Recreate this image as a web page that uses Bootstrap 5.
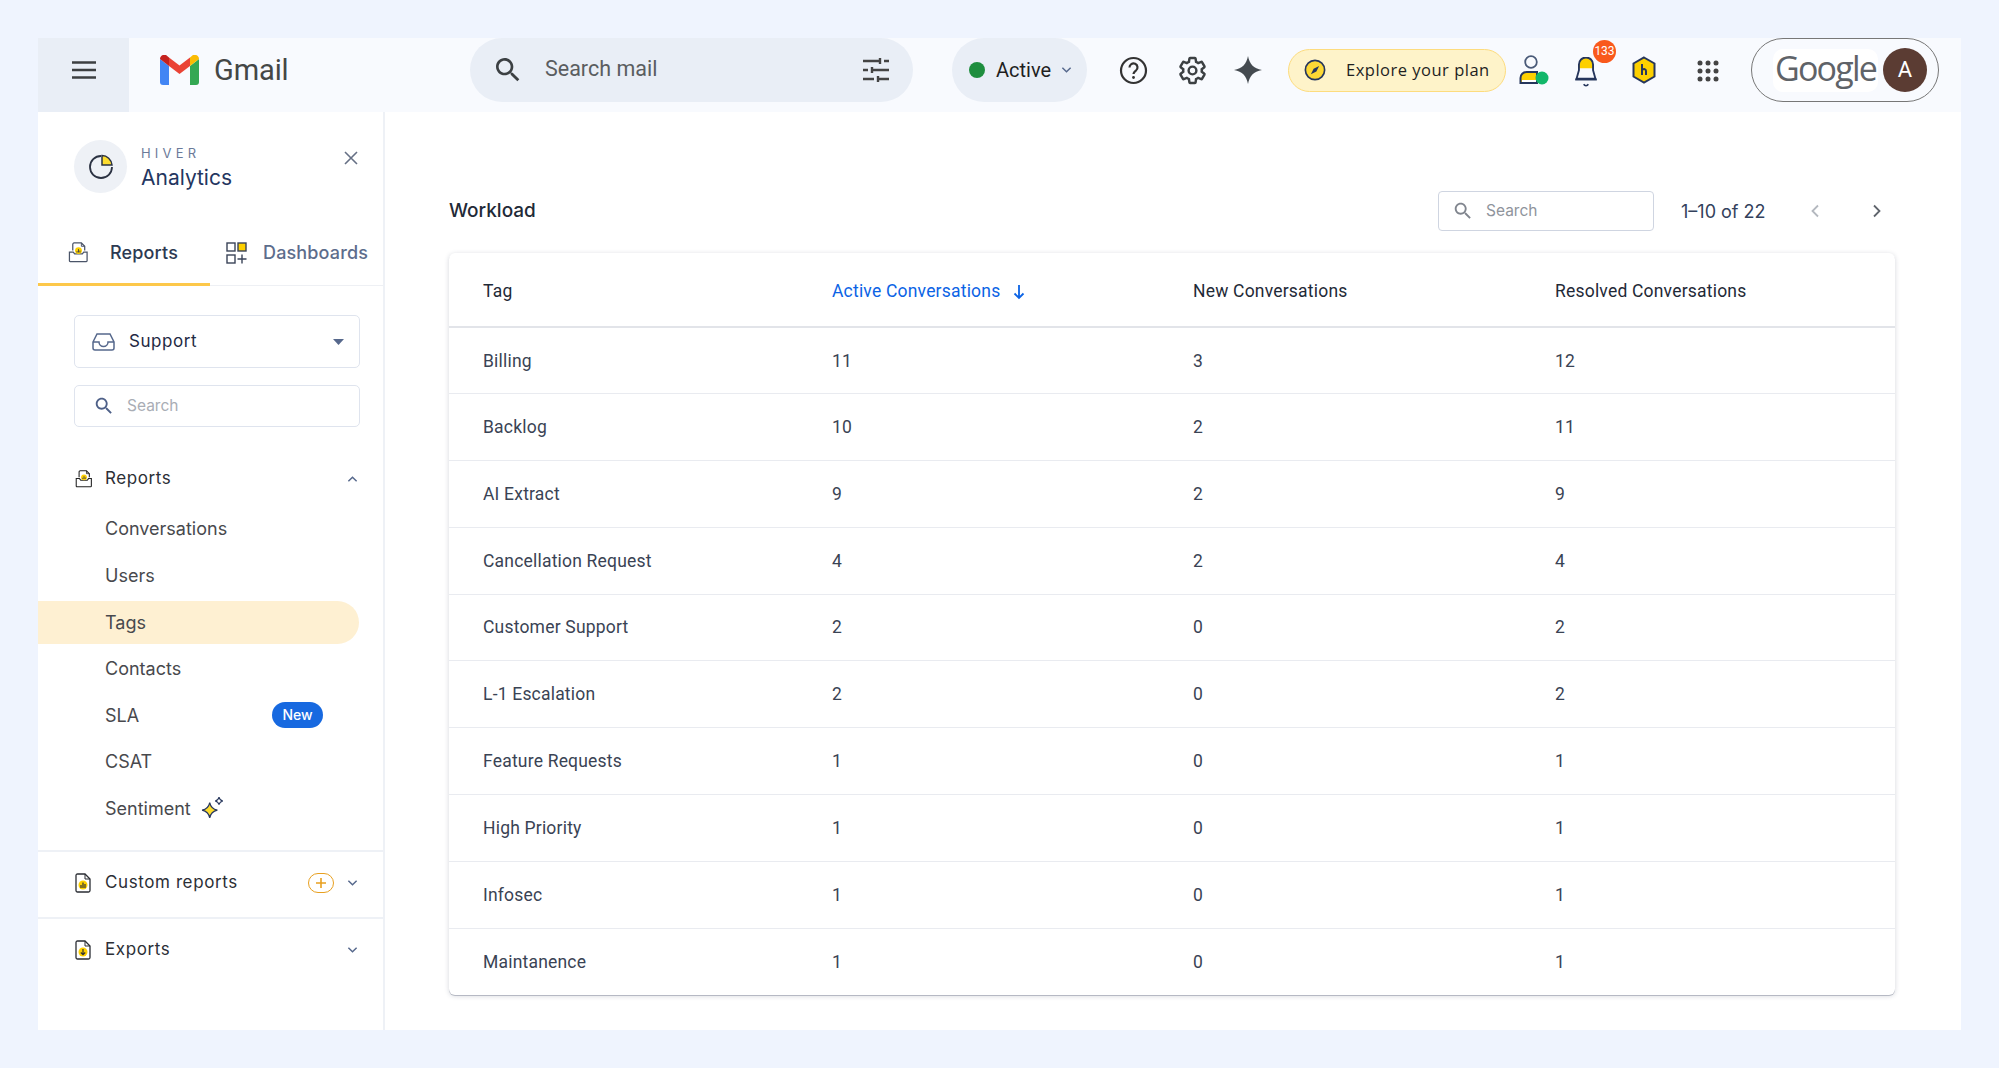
<!DOCTYPE html>
<html lang="en">
<head>
    <meta charset="UTF-8">
    <meta name="viewport" content="width=device-width, initial-scale=1.0">
    <title>Hiver Analytics</title>
    <link href="https://cdn.jsdelivr.net/npm/bootstrap@5.3.0/dist/css/bootstrap.min.css" rel="stylesheet">
    <style>
        body {
            background-color: #eff4fe;
            font-family: "Inter", "Liberation Sans", sans-serif;
            padding: 38px;
            min-height: 1068px;
        }
        .gm-frame { height: 992px; background: #fff; }

        /* gmail bar */
        .gm-bar { height: 74px; background: #f8fafe; }
        .gm-burger { width: 91px; height: 74px; background: #e9eef6; padding-bottom: 10px; }
        .gm-bar-row { height: 64px; }
        .gm-brand { width: 341px; padding-left: 31px; gap: 15px; }
        .gm-word { font-family: "Roboto", sans-serif; font-size: 29px; color: #444746; letter-spacing: -.1px; padding-top: 2px; }
        .gm-search { width: 443px; height: 64px; background: #e9eef6; border-radius: 32px; padding: 0 23px 0 22px; }
        .gm-search-text { font-family: "Roboto", sans-serif; font-size: 21.500px; color: #5a5d60; margin-left: 21px; padding-bottom: 2px; }
        .gm-active { width: 135px; height: 64px; background: #e9eef6; border-radius: 32px; margin-left: 39px; padding-left: 17px; }
        .gm-dot { width: 16px; height: 16px; border-radius: 50%; background: #1e8e3e; }
        .gm-active-text { font-family: "Roboto", sans-serif; font-size: 20px; color: #1f1f1f; margin: 0 10px 0 11px; }
        .tb-ico { width: 40px; }
        .ml-help { margin-left: 26px; }
        .ml-gear { margin-left: 19px; }
        .ml-spark { margin-left: 16px; }
        .ml-person { margin-left: 8px; }
        .ml-bell { margin-left: 12px; }
        .ml-hex { margin-left: 18px; }
        .ml-grid { margin-left: 24px; }
        .gm-explore { width: 218px; height: 43px; margin-left: 20px; background: #fef3c9; border: 1.5px solid #fddc7e; border-radius: 22px; padding-left: 15px; font-family: "Open Sans", sans-serif; font-size: 16.5px; font-weight: 500; letter-spacing: .5px; color: #1f1f1f; gap: 20px; }
        .bell-count { top: -13px; left: 27px; width: 23px; height: 23px; background: #f9591c; color: #fff; font-family: "Roboto", sans-serif; font-size: 12px; line-height: 23px; text-align: center; border-radius: 50%; }
        .gm-google { width: 188px; height: 64px; margin-left: 23px; border: 1.5px solid #777; border-radius: 32px; padding-left: 21px; }
        .gm-google-word { width: 105px; height: 43px; background: #fff; border-radius: 10px; font-family: "Open Sans", sans-serif; font-size: 34px; font-weight: 500; line-height: 39px; color: #5f6368; letter-spacing: -1.8px; text-align: center; }
        .gm-avatar { width: 44px; height: 44px; margin-left: 5px; border-radius: 50%; background: #5b3c33; color: #fff; font-family: "Roboto", sans-serif; font-size: 22px; line-height: 44px; text-align: center; }

        /* sidebar */
        .hv-side { width: 347px; flex: none; border-right: 2px solid #eef1f6; height: 918px; }
        .hv-head { height: 173px; padding: 28px 0 0 36px; }
        .hv-logo { width: 53px; height: 53px; border-radius: 50%; background: #eef1f6; padding-left: 2px; }
        .hv-brand { margin-left: 14px; padding-top: 5px; }
        .hv-small { font-size: 13px; line-height: 16px; letter-spacing: 4.2px; color: #6b7a99; }
        .hv-name { font-size: 21px; line-height: 29px; color: #24365f; margin-top: 2px; }
        .hv-close { margin: 11px 25px 0 auto; }
        .hv-tabs { height: 62px; border-bottom: 1px solid #eef0f4; margin-top: -61px; }
        .hv-tab { height: 62px; padding: 0 0 2px 30px; gap: 21px; font-size: 18px; font-weight: 500; letter-spacing: .15px; color: #2d3a52; width: 172px; border-bottom: 3px solid transparent; }
        .hv-tab.on { border-bottom-color: #fdc84a; }
        .hv-tab.off { color: #5d6d8c; width: 173px; padding-left: 16px; gap: 16px; white-space: nowrap; }
        .hv-pick { height: 53px; margin: 29px 23px 0 36px; border: 1.5px solid #dfe4ee; border-radius: 5px; padding: 0 15px 0 17px; font-size: 17px; letter-spacing: .55px; color: #1f2a44; gap: 14px; }
        .hv-find { height: 42px; margin: 17px 23px 0 36px; border: 1.5px solid #dfe4ee; border-radius: 5px; padding: 0 0 0 18px; gap: 12px; }
        .hv-find input { border: 0; padding: 0; font-size: 15.5px; width: 150px; outline: none; color: #333; }
        .hv-find input::placeholder { color: #a9adb5; opacity: 1; }
        .hv-sec { height: 65px; padding: 0 25px 3px 37px; font-size: 17px; letter-spacing: .6px; color: #2c2f36; gap: 14px; }
        .hv-open { margin-top: 18px; height: 68px; padding-bottom: 0; gap: 12px; }
        .hv-menu { padding: 0; margin: -8px 0 0; list-style: none; }
        .hv-menu li { height: 46.7px; padding-left: 67px; padding-right: 60px; font-size: 18px; color: #48494d; }
        .hv-menu li.on { background: #fef0d2; margin-right: 24px; border-radius: 0 22px 22px 0; padding-right: 35px; height: 43px; margin-top: 3px; margin-bottom: .7px; }
        .hv-new { width: 51px; height: 26px; background: #1769e0; color: #fff; font-size: 14px; font-weight: 500; line-height: 26px; text-align: center; border-radius: 13px; }
        .hv-plus { width: 26px; height: 20px; border: 1.5px solid #e8a020; border-radius: 10px; margin-right: -1px; }
        .hv-rule { border-top: 2px solid #eef1f6; }
        .hv-rule-top { margin-top: 18px; }
        .hv-spark { margin-left: 10px; }

        /* content */
        .hv-main { padding: 0 66px 0 64px; }
        .hv-tools { height: 84px; margin-top: 57px; }
        .hv-title { font-size: 19px; font-weight: 500; color: #1f2a37; }
        .hv-tsearch { width: 216px; height: 40px; border: 1.5px solid #cfd5e1; border-radius: 4px; padding-left: 13px; gap: 12px; }
        .hv-tsearch input { border: 0; padding: 0; font-size: 15.5px; width: 150px; outline: none; }
        .hv-tsearch input::placeholder { color: #8f949c; opacity: 1; }
        .hv-count { font-size: 18px; color: #33415c; margin-left: 27px; width: 129px; }
        .hv-pager { gap: 52px; margin-right: 13px; }
        .hv-card { border-radius: 6px; box-shadow: 0 1px 5px rgba(40, 50, 80, .2), 0 1px 0 rgba(40, 50, 80, .25); overflow: hidden; }
        .hv-table { table-layout: fixed; margin: 0; font-family: "Roboto", sans-serif; font-size: 17.500px; letter-spacing: .2px; }
        .hv-table th, .hv-table td { padding: 0 0 0 34px; vertical-align: middle; border-color: #e9ebf0; }
        .hv-table th { height: 74px; padding-top: 3px; font-weight: 400; color: #1f2a37; border-bottom: 2px solid #e2e4e9; }
        .hv-table td { height: 66.800px; color: #3a4354; }
        .hv-table tr:last-child td { border-bottom: 0; }
        .hv-table th.hv-sort { color: #0b63e5; }
        .col-tag { width: 349px; }
        .col-act { width: 361px; }
        .col-new { width: 362px; }
    </style>
</head>
<body>
<svg class="d-none">
    <symbol id="i-search" viewBox="0 0 24 24"><path d="M15.5 14h-.79l-.28-.27C15.41 12.59 16 11.11 16 9.5 16 5.91 13.09 3 9.5 3S3 5.91 3 9.5 5.91 16 9.5 16c1.61 0 3.09-.59 4.23-1.57l.27.28v.79l5 4.99L20.49 19l-4.99-5zm-6 0C7.01 14 5 11.99 5 9.5S7.01 5 9.5 5 14 7.01 14 9.5 11.99 14 9.5 14z"/></symbol>
    <symbol id="i-report" viewBox="0 0 22 22"><path d="M5 9V2.5C5 1.7 5.6 1 6.4 1H14l3.5 3.5V9" fill="none" stroke="currentColor" stroke-width="1.3"/><path d="M14 1v3.5h3.5" fill="none" stroke="currentColor" stroke-width="1"/><path d="M1.5 10.5h4l1.5 2h8l1.5-2h3.5v9.2c0 .5-.4.8-.8.8H2.3c-.5 0-.8-.3-.8-.8z" fill="#fff" stroke="currentColor" stroke-width="1.3"/><circle cx="11" cy="9" r="3.6" fill="#fdd000"/><path d="M9.5 11V9.5M11 11V7.5M12.5 11V9" stroke="#444" stroke-width="1"/></symbol>
    <symbol id="i-chev" viewBox="0 0 12 8"><path d="M1.5 1.5 6 6l4.5-4.5" fill="none" stroke="#56688c" stroke-width="1.6"/></symbol>
    <symbol id="i-page" viewBox="0 0 16 20"><path d="M1 2.5C1 1.6 1.6 1 2.5 1H10l5 5v11.5c0 .9-.6 1.5-1.5 1.5h-11c-.9 0-1.5-.6-1.5-1.5z" fill="#fff" stroke="#2a2d33" stroke-width="1.3"/><path d="M10 1v5h5" fill="none" stroke="#2a2d33" stroke-width="1"/></symbol>
</svg>

<div class="gm-frame">
    <div class="gm-bar d-flex">
        <div class="gm-burger d-flex align-items-center justify-content-center">
            <svg width="26" height="20" viewBox="0 0 26 20"><path d="M1 2.5h24M1 10h24M1 17.5h24" stroke="#3c3f41" stroke-width="2.4"/></svg>
        </div>
        <div class="gm-bar-row d-flex align-items-center flex-grow-1">
            <div class="gm-brand d-flex align-items-center">
                <svg width="39" height="30" viewBox="0 0 39 30">
                    <path d="M0 27V4l9 7v19H3a3 3 0 0 1-3-3z" fill="#4285f4"/>
                    <path d="M39 27V4l-9 7v19h6a3 3 0 0 0 3-3z" fill="#34a853"/>
                    <path d="M9 11 19.500 19 30 11V2.500l-10.500 8-10.500-8z" fill="#ea4335"/>
                    <path d="M0 4C0 .8 3.500-1 6-.0L9 2.500V11L0 4z" fill="#c5221f"/>
                    <path d="M39 4c0-3.200-3.500-5-6-4l-3 2.500V11l9-7z" fill="#fbbc04"/>
                </svg>
                <span class="gm-word">Gmail</span>
            </div>
            <div class="gm-search d-flex align-items-center">
                <svg width="32" height="32" fill="#3c4043"><use href="#i-search"/></svg>
                <span class="gm-search-text flex-grow-1">Search mail</span>
                <svg width="28" height="26" viewBox="0 0 28 26"><path d="M1 4h17M22 4h5M1 13h5M10 13h17M1 22h11M16 22h11M18 1v6M10 10v6M16 19v6" stroke="#444" stroke-width="2.400" fill="none"/></svg>
            </div>
            <div class="gm-active d-flex align-items-center">
                <span class="gm-dot"></span>
                <span class="gm-active-text">Active</span>
                <svg width="11" height="8"><use href="#i-chev" style="color:#444"/></svg>
            </div>
            <div class="tb-ico ml-help text-center">
                <svg width="29" height="29" viewBox="0 0 29 29"><circle cx="14.500" cy="14.500" r="12.500" fill="none" stroke="#333" stroke-width="2.200"/><path d="M10.500 11.500a4 4 0 1 1 6.500 3c-1.500 1.200-2.500 1.800-2.500 3.500" fill="none" stroke="#333" stroke-width="2.200"/><circle cx="14.500" cy="21.500" r="1.400" fill="#333"/></svg>
            </div>
            <div class="tb-ico ml-gear text-center">
                <svg width="31" height="31" viewBox="0 0 24 24"><path d="M19.140 12.940c.04-.3.06-.61.06-.94 0-.32-.02-.64-.07-.94l2.030-1.580c.18-.14.23-.41.12-.61l-1.920-3.320c-.12-.22-.37-.29-.59-.22l-2.390.96c-.5-.38-1.030-.7-1.620-.94l-.36-2.540c-.04-.24-.24-.41-.48-.41h-3.840c-.24 0-.43.17-.47.41l-.36 2.540c-.59.24-1.130.57-1.620.94l-2.390-.96c-.22-.08-.47 0-.59.22L2.740 8.870c-.12.21-.08.47.12.61l2.030 1.580c-.05.3-.09.63-.09.94s.02.64.07.94l-2.030 1.580c-.18.14-.23.41-.12.61l1.920 3.320c.12.22.37.29.59.22l2.390-.96c.5.38 1.030.7 1.620.94l.36 2.540c.05.24.24.41.48.41h3.840c.24 0 .44-.17.47-.41l.36-2.540c.59-.24 1.130-.56 1.620-.94l2.390.96c.22.08.47 0 .59-.22l1.920-3.320c.12-.22.07-.47-.12-.61l-2.010-1.580z" fill="none" stroke="#3c4043" stroke-width="1.900"/><circle cx="12" cy="12" r="3" fill="none" stroke="#3c4043" stroke-width="1.900"/></svg>
            </div>
            <div class="tb-ico ml-spark text-center">
                <svg width="28" height="28" viewBox="0 0 28 28"><path d="M14 0c1.500 8 5.500 12.500 14 14-8.500 1.500-12.500 6-14 14-1.500-8-5.500-12.500-14-14 8.500-1.500 12.500-6 14-14z" fill="#444a50"/></svg>
            </div>
            <div class="gm-explore d-flex align-items-center">
                <svg width="22" height="22" viewBox="0 0 24 24"><circle cx="12" cy="12" r="10.500" fill="#fdd835" stroke="#26365c" stroke-width="1.800"/><path d="M16.500 7.500 13.500 13.500 7.500 16.500 10.500 10.500z" fill="#26365c"/></svg>
                <span>Explore your plan</span>
            </div>
            <div class="tb-ico ml-person text-center">
                <svg width="30" height="32" viewBox="0 0 30 32"><circle cx="12" cy="8" r="5.800" fill="none" stroke="#4a5a78" stroke-width="1.800"/><path d="M1.500 29v-5a6 6 0 0 1 6-6H18v11z" fill="#fdd000" stroke="#26365c" stroke-width="2"/><path d="M3 27h14" stroke="#fff" stroke-width="2"/><circle cx="23" cy="24" r="6.500" fill="#12b76a"/></svg>
            </div>
            <div class="tb-ico ml-bell text-center position-relative">
                <svg class="mt-1" width="26" height="31" viewBox="0 0 26 33"><path d="M5.500 12V8a7.500 7.500 0 0 1 15 0v4z" fill="#fdd000"/><path d="M5.500 14V8a7.500 7.500 0 0 1 15 0v6l2.500 9H3z" fill="none" stroke="#26365c" stroke-width="2"/><path d="M1.500 24h23" stroke="#26365c" stroke-width="2"/><path d="M10.500 29c1.200 2 3.800 2 5 0" fill="none" stroke="#26365c" stroke-width="1.600"/></svg>
                <span class="bell-count position-absolute">133</span>
            </div>
            <div class="tb-ico ml-hex text-center">
                <svg width="24" height="28" viewBox="0 0 24 28"><path d="M12 1.500 22.500 7.500v13L12 26.500 1.500 20.500v-13z" fill="#fdd000" stroke="#26365c" stroke-width="2"/><path d="M10 8v11M10 14c2-1.500 4-1 4 1v4" fill="none" stroke="#26365c" stroke-width="2"/></svg>
            </div>
            <div class="tb-ico ml-grid text-center">
                <svg width="22" height="22" viewBox="0 0 22 22" fill="#444"><circle cx="3" cy="3" r="2.500"/><circle cx="11" cy="3" r="2.500"/><circle cx="19" cy="3" r="2.500"/><circle cx="3" cy="11" r="2.500"/><circle cx="11" cy="11" r="2.500"/><circle cx="19" cy="11" r="2.500"/><circle cx="3" cy="19" r="2.500"/><circle cx="11" cy="19" r="2.500"/><circle cx="19" cy="19" r="2.500"/></svg>
            </div>
            <div class="gm-google d-flex align-items-center">
                <span class="gm-google-word">Google</span>
                <span class="gm-avatar">A</span>
            </div>
        </div>
    </div>

    <div class="d-flex">
        <div class="hv-side">
            <div class="hv-head d-flex align-items-start">
                <div class="hv-logo d-flex align-items-center justify-content-center flex-none">
                    <svg width="26" height="26" viewBox="0 0 26 26"><path d="M13 2a11 11 0 1 0 11 11" fill="none" stroke="#2b3242" stroke-width="1.800" transform="translate(-1 0)"/><path d="M13 1.500c5 0 9.500 4 10 9.500H13z" fill="#fddc2e" stroke="#2b3242" stroke-width="1.500"/></svg>
                </div>
                <div class="hv-brand">
                    <div class="hv-small">HIVER</div>
                    <div class="hv-name">Analytics</div>
                </div>
                <svg class="hv-close" width="14" height="14" viewBox="0 0 14 14"><path d="M1 1l12 12M13 1 1 13" stroke="#667085" stroke-width="1.600"/></svg>
            </div>
            <div class="hv-tabs d-flex">
                <div class="hv-tab on d-flex align-items-center">
                    <svg width="21" height="23" style="color:#4a5468"><use href="#i-report"/></svg>
                    <span>Reports</span>
                </div>
                <div class="hv-tab off d-flex align-items-center">
                    <svg width="21" height="22" viewBox="0 0 21 22"><g fill="none" stroke="#3a4358" stroke-width="1.400"><rect x="1" y="1" width="8" height="8"/><rect x="12" y="1" width="8" height="8" fill="#fdd000"/><rect x="1" y="13" width="8" height="8"/><path d="M16 12.500v9M11.500 17h9"/></g></svg>
                    <span>Dashboards</span>
                </div>
            </div>
            <div class="hv-pick d-flex align-items-center">
                <svg width="23" height="18" viewBox="0 0 23 18"><path d="M1 9 5 1h13l4 8v6a2 2 0 0 1-2 2H3a2 2 0 0 1-2-2zM1 9h6a4.500 4.500 0 0 0 9 0h6" fill="none" stroke="#56688c" stroke-width="1.500"/></svg>
                <span class="flex-grow-1">Support</span>
                <svg width="11" height="6" viewBox="0 0 11 6"><path d="M0 0h11L5.500 6z" fill="#56688c"/></svg>
            </div>
            <div class="hv-find d-flex align-items-center">
                <svg width="22" height="22" fill="#4e6088"><use href="#i-search"/></svg>
                <input type="text" placeholder="Search">
            </div>
            <div class="hv-sec hv-open d-flex align-items-center">
                <svg width="18" height="20" style="color:#222"><use href="#i-report"/></svg>
                <span class="flex-grow-1">Reports</span>
                <svg width="11" height="8" style="transform:rotate(180deg)"><use href="#i-chev"/></svg>
            </div>
            <ul class="hv-menu">
                <li class="d-flex align-items-center">Conversations</li>
                <li class="d-flex align-items-center">Users</li>
                <li class="on d-flex align-items-center">Tags</li>
                <li class="d-flex align-items-center">Contacts</li>
                <li class="d-flex align-items-center justify-content-between">SLA <span class="hv-new">New</span></li>
                <li class="d-flex align-items-center">CSAT</li>
                <li class="d-flex align-items-center">Sentiment
                    <svg class="hv-spark" width="24" height="24" viewBox="0 0 22 22"><path d="M8 6c.8 4 2.500 6 7 7-4.500 1-6.200 3-7 7-.8-4-2.500-6-7-7 4.500-1 6.200-3 7-7z" fill="#fddc2e" stroke="#26365c" stroke-width="1.100"/><path d="M16.500 1c.4 2 1.200 3 3.500 3.500-2.300.5-3.100 1.500-3.500 3.500-.4-2-1.200-3-3.500-3.500 2.300-.5 3.100-1.500 3.500-3.500z" fill="#fff" stroke="#26365c" stroke-width="1"/></svg>
                </li>
            </ul>
            <div class="hv-rule hv-rule-top"></div>
            <div class="hv-sec d-flex align-items-center">
                <svg width="16" height="20"><use href="#i-page"/><circle cx="8" cy="12" r="4.500" fill="#fdd000"/><path d="M6 15v-3M8 15V9.500M10 15v-4" stroke="#333" stroke-width="1.200"/></svg>
                <span class="flex-grow-1">Custom reports</span>
                <span class="hv-plus d-flex align-items-center justify-content-center"><svg width="12" height="12" viewBox="0 0 12 12"><path d="M6 1v10M1 6h10" stroke="#e8a020" stroke-width="1.600"/></svg></span>
                <svg width="11" height="8"><use href="#i-chev"/></svg>
            </div>
            <div class="hv-rule"></div>
            <div class="hv-sec d-flex align-items-center">
                <svg width="16" height="20"><use href="#i-page"/><circle cx="8" cy="12" r="4.500" fill="#fdd000"/><path d="M8 9v5.500M5.800 12.500 8 14.700l2.200-2.200" fill="none" stroke="#333" stroke-width="1.200"/></svg>
                <span class="flex-grow-1">Exports</span>
                <svg width="11" height="8"><use href="#i-chev"/></svg>
            </div>
        </div>

        <div class="hv-main flex-grow-1">
            <div class="hv-tools d-flex align-items-center">
                <span class="hv-title flex-grow-1">Workload</span>
                <div class="hv-tsearch d-flex align-items-center">
                    <svg width="22" height="22" fill="#80858e"><use href="#i-search"/></svg>
                    <input type="text" placeholder="Search">
                </div>
                <span class="hv-count">1–10 of 22</span>
                <div class="hv-pager d-flex align-items-center">
                    <svg width="10" height="14" viewBox="0 0 10 14"><path d="M8 1.500 2.500 7 8 12.500" fill="none" stroke="#b4b8bf" stroke-width="1.800"/></svg>
                    <svg width="10" height="14" viewBox="0 0 10 14"><path d="M2 1.500 7.500 7 2 12.500" fill="none" stroke="#5f646c" stroke-width="1.800"/></svg>
                </div>
            </div>
            <div class="hv-card">
                <table class="table hv-table">
                    <thead>
                        <tr>
                            <th class="col-tag">Tag</th>
                            <th class="col-act hv-sort">Active Conversations
                                <svg class="ms-2" width="12" height="16" viewBox="0 0 12 16"><path d="M6 1v13M1.500 9.500 6 14l4.500-4.500" fill="none" stroke="#0b63e5" stroke-width="1.800"/></svg>
                            </th>
                            <th class="col-new">New Conversations</th>
                            <th>Resolved Conversations</th>
                        </tr>
                    </thead>
                    <tbody>
                        <tr><td>Billing</td><td>11</td><td>3</td><td>12</td></tr>
                        <tr><td>Backlog</td><td>10</td><td>2</td><td>11</td></tr>
                        <tr><td>AI Extract</td><td>9</td><td>2</td><td>9</td></tr>
                        <tr><td>Cancellation Request</td><td>4</td><td>2</td><td>4</td></tr>
                        <tr><td>Customer Support</td><td>2</td><td>0</td><td>2</td></tr>
                        <tr><td>L-1 Escalation</td><td>2</td><td>0</td><td>2</td></tr>
                        <tr><td>Feature Requests</td><td>1</td><td>0</td><td>1</td></tr>
                        <tr><td>High Priority</td><td>1</td><td>0</td><td>1</td></tr>
                        <tr><td>Infosec</td><td>1</td><td>0</td><td>1</td></tr>
                        <tr><td>Maintanence</td><td>1</td><td>0</td><td>1</td></tr>
                    </tbody>
                </table>
            </div>
        </div>
    </div>
</div>
<script src="https://cdn.jsdelivr.net/npm/bootstrap@5.3.0/dist/js/bootstrap.bundle.min.js"></script>
</body>
</html>
